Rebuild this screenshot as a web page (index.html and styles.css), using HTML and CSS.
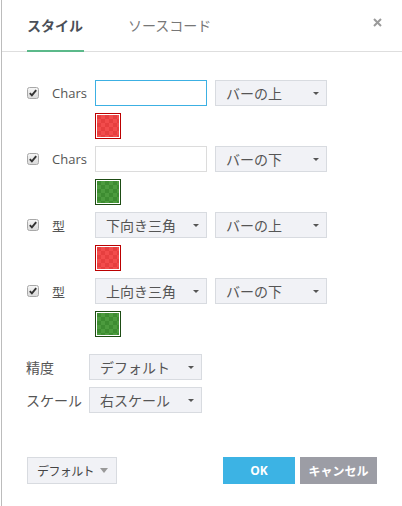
FILE: index.html
```html
<!DOCTYPE html>
<html lang="ja">
<head>
<meta charset="utf-8">
<link rel="stylesheet" href="styles.css">
</head>
<body>
<div class="dialog">
  <div class="header">
    <div class="tab active">スタイル</div>
    <div class="tab">ソースコード</div>
    <svg class="close" width="9" height="9" viewBox="0 0 9 9"><path d="M1 1L8 8M8 1L1 8" stroke="#9a9a9a" stroke-width="2" fill="none"/></svg>
  </div>
  <div class="body">
    <div class="list">
      <div class="row">
        <svg class="cb" width="12" height="12" viewBox="0 0 12 12"><defs><linearGradient id="g1" x1="0" y1="0" x2="0" y2="1"><stop offset="0" stop-color="#f7f7f7"/><stop offset="1" stop-color="#d9d9d9"/></linearGradient></defs><rect x="0.5" y="0.5" width="11" height="11" rx="2" fill="url(#g1)" stroke="#a8a8a8"/><path d="M2.8 6.2L4.9 8.4L9.2 3.2" stroke="#333" stroke-width="1.9" fill="none"/></svg>
        <span class="lbl latin">Chars</span>
        <div class="input focus"></div>
        <div class="sel"><span>バーの上</span><i class="arr"></i></div>
      </div>
      <div class="swrow"><div class="sw red"><div class="chk"></div></div></div>
      <div class="row">
        <svg class="cb" width="12" height="12" viewBox="0 0 12 12"><rect x="0.5" y="0.5" width="11" height="11" rx="2" fill="url(#g1)" stroke="#a8a8a8"/><path d="M2.8 6.2L4.9 8.4L9.2 3.2" stroke="#333" stroke-width="1.9" fill="none"/></svg>
        <span class="lbl latin">Chars</span>
        <div class="input"></div>
        <div class="sel"><span>バーの下</span><i class="arr"></i></div>
      </div>
      <div class="swrow"><div class="sw green"><div class="chk"></div></div></div>
      <div class="row">
        <svg class="cb" width="12" height="12" viewBox="0 0 12 12"><rect x="0.5" y="0.5" width="11" height="11" rx="2" fill="url(#g1)" stroke="#a8a8a8"/><path d="M2.8 6.2L4.9 8.4L9.2 3.2" stroke="#333" stroke-width="1.9" fill="none"/></svg>
        <span class="lbl">型</span>
        <div class="sel"><span>下向き三角</span><i class="arr"></i></div>
        <div class="sel"><span>バーの上</span><i class="arr"></i></div>
      </div>
      <div class="swrow"><div class="sw red"><div class="chk"></div></div></div>
      <div class="row">
        <svg class="cb" width="12" height="12" viewBox="0 0 12 12"><rect x="0.5" y="0.5" width="11" height="11" rx="2" fill="url(#g1)" stroke="#a8a8a8"/><path d="M2.8 6.2L4.9 8.4L9.2 3.2" stroke="#333" stroke-width="1.9" fill="none"/></svg>
        <span class="lbl">型</span>
        <div class="sel"><span>上向き三角</span><i class="arr"></i></div>
        <div class="sel"><span>バーの下</span><i class="arr"></i></div>
      </div>
      <div class="swrow"><div class="sw green"><div class="chk"></div></div></div>
    </div>
    <div class="opts">
      <div class="opt"><span class="olbl">精度</span><div class="sel osel"><span>デフォルト</span><i class="arr"></i></div></div>
      <div class="opt"><span class="olbl">スケール</span><div class="sel osel"><span>右スケール</span><i class="arr"></i></div></div>
    </div>
  </div>
  <div class="footer">
    <div class="defbtn"><span>デフォルト</span><i class="arr2"></i></div>
    <div class="btns">
      <div class="btn ok">OK</div>
      <div class="btn cancel">キャンセル</div>
    </div>
  </div>
</div>
</body>
</html>
```

FILE: styles.css
```css
* { box-sizing: border-box; }
html, body { margin: 0; padding: 0; background: #fff; }
body {
  font-family: "Open Sans", "Noto Sans CJK JP", sans-serif;
  color: #4a4a4a;
  width: 402px;
  height: 506px;
  overflow: hidden;
}
.dialog {
  margin-left: 1px;
  border-left: 1px solid #bcbcbc;
  height: 506px;
  position: relative;
}
.header {
  height: 52px;
  border-bottom: 1px solid #dedede;
  display: flex;
  align-items: center;
  padding-left: 25px;
  position: relative;
}
.tab {
  font-family: "Noto Sans CJK JP", sans-serif;
  font-size: 14px;
  color: #777;
  height: 51px;
  line-height: 51px;
  position: relative;
  margin-right: 45px;
}
.tab.active {
  font-weight: bold;
  color: #4b4f58;
}
.tab.active::after {
  content: "";
  position: absolute;
  left: 0;
  right: -1px;
  bottom: -1px;
  height: 2px;
  background: #5bb98a;
}
.close {
  position: absolute;
  right: 20px;
  top: 18px;
}
.body {
  padding: 28px 0 0 25px;
}
.list {
  display: flex;
  flex-direction: column;
  gap: 7px;
}
.row {
  display: flex;
  align-items: center;
  height: 26px;
}
.cb { flex: none; margin-right: 13px; }
.lbl {
  width: 43px;
  font-size: 13px;
  color: #555;
  font-family: "Noto Sans CJK JP", sans-serif;
}
.lbl.latin { font-family: "Open Sans", sans-serif; }
.input {
  width: 112px;
  height: 26px;
  border: 1px solid #dcdcdc;
  background: #fff;
  margin-right: 8px;
}
.input.focus { border-color: #3cb0e3; }
.sel {
  width: 112px;
  height: 26px;
  background: #f1f2f6;
  border: 1px solid #d8dbe0;
  display: flex;
  align-items: center;
  justify-content: space-between;
  padding: 0 7px 0 10px;
  font-family: "Noto Sans CJK JP", sans-serif;
  font-size: 14px;
  color: #555;
  margin-right: 8px;
  white-space: nowrap;
}
.arr {
  width: 0;
  height: 0;
  border-left: 3px solid transparent;
  border-right: 3px solid transparent;
  border-top: 3px solid #555;
}
.swrow {
  height: 26px;
  padding-left: 68px;
}
.sw {
  width: 26px;
  height: 26px;
  border: 1px solid #b00;
  padding: 1px;
  background: #fff;
}
.sw.green { border-color: #1d4c14; }
.chk {
  width: 22px;
  height: 22px;
}
.red .chk {
  background: repeating-conic-gradient(#f24c4c 0 25%, #e63f3f 0 50%) 0 0 / 8px 8px;
}
.green .chk {
  background: repeating-conic-gradient(#4c9b3e 0 25%, #3d8c31 0 50%) 0 0 / 8px 8px;
}
.opts {
  margin-top: 17px;
  display: flex;
  flex-direction: column;
  gap: 7px;
}
.opt {
  display: flex;
  align-items: center;
  height: 26px;
}
.olbl {
  width: 63px;
  font-family: "Noto Sans CJK JP", sans-serif;
  font-size: 14px;
  color: #555;
  margin-left: -1px;
  white-space: nowrap;
}
.osel {
  width: 113px;
}
.footer {
  position: absolute;
  left: 25px;
  right: 25px;
  top: 457px;
  display: flex;
  justify-content: space-between;
}
.defbtn {
  width: 90px;
  height: 27px;
  background: #f1f2f6;
  border: 1px solid #d8dbe0;
  display: flex;
  align-items: center;
  padding: 0 8px 0 9px;
  justify-content: space-between;
  font-family: "Noto Sans CJK JP", sans-serif;
  font-size: 12px;
  letter-spacing: -0.6px;
  color: #444;
  white-space: nowrap;
}
.arr2 {
  width: 0;
  height: 0;
  border-left: 4px solid transparent;
  border-right: 4px solid transparent;
  border-top: 5px solid #999;
}
.btns { display: flex; gap: 5px; }
.btn {
  height: 27px;
  display: flex;
  align-items: center;
  justify-content: center;
  color: #fff;
  font-weight: bold;
  font-size: 12px;
  font-family: "Open Sans", "Noto Sans CJK JP", sans-serif;
}
.ok { width: 72px; background: #3cb3e4; }
.cancel { width: 77px; background: #9c9da5; }
```
